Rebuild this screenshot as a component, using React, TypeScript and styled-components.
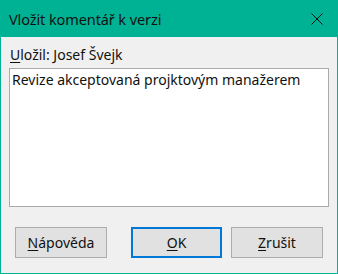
import React from 'react';
import styled, { createGlobalStyle } from 'styled-components';

const GlobalStyle = createGlobalStyle`
  html, body {
    margin: 0;
    padding: 0;
    background: #f0f0f0;
  }
  body {
    font-family: "Noto Sans", "Open Sans", sans-serif;
  }
`;

const Window = styled.div`
  width: 338px;
  height: 274px;
  box-sizing: border-box;
  border: 1px solid #00b294;
  border-top: none;
  background: #f0f0f0;
  display: flex;
  flex-direction: column;
`;

const TitleBar = styled.div`
  height: 37px;
  flex: none;
  background: #00b294;
  display: flex;
  align-items: center;
  justify-content: space-between;
  padding: 0 15px 0 9px;
  margin: 0 -1px;
`;

const Title = styled.span`
  font-size: 14.5px;
  color: #111;
  letter-spacing: -0.1px;
`;

const CloseButton = styled.button`
  width: 12px;
  height: 12px;
  padding: 0;
  border: none;
  background: none;
  display: block;
  svg {
    display: block;
  }
`;

const Body = styled.div`
  flex: 1;
  display: flex;
  flex-direction: column;
  padding: 8px 8px 0;
`;

const Label = styled.label`
  font-size: 14px;
  line-height: 20px;
  color: #111;
  padding-left: 1px;
  u {
    text-decoration-thickness: 1px;
    text-underline-offset: 2px;
  }
`;

const Comment = styled.textarea`
  margin: 3px 0 0;
  width: 320px;
  height: 139px;
  box-sizing: border-box;
  border: 1px solid #ababab;
  background: #fff;
  resize: none;
  padding: 1px 2px;
  font-family: "Noto Sans", "Open Sans", sans-serif;
  font-size: 14px;
  line-height: 20px;
  color: #111;
  outline: none;
`;

const ButtonRow = styled.div`
  display: flex;
  align-items: center;
  margin-top: 20px;
  padding: 0 6px;
`;

const ButtonGroup = styled.div`
  display: flex;
  gap: 9px;
  margin-left: auto;
`;

const Button = styled.button<{ $default?: boolean }>`
  width: ${(p) => (p.$default ? '91px' : '92px')};
  height: 31px;
  box-sizing: border-box;
  background: #e1e1e1;
  border: ${(p) => (p.$default ? '2px solid #0078d7' : '1px solid #adadad')};
  font-family: "Noto Sans", "Open Sans", sans-serif;
  font-size: 14px;
  color: #111;
  padding: 0;
  u {
    text-decoration-thickness: 1px;
    text-underline-offset: 2px;
  }
`;

export default function App() {
  return (
    <>
      <GlobalStyle />
      <Window>
        <TitleBar>
          <Title>Vložit komentář k verzi</Title>
          <CloseButton aria-label="Zavřít">
            <svg width="12" height="12" viewBox="0 0 12 12">
              <path d="M0.5 0.5 L11.5 11.5 M11.5 0.5 L0.5 11.5" stroke="#111" strokeWidth="1" fill="none" />
            </svg>
          </CloseButton>
        </TitleBar>
        <Body>
          <Label>
            <u>U</u>ložil: Josef Švejk
          </Label>
          <Comment readOnly value="Revize akceptovaná projktovým manažerem" />
          <ButtonRow>
            <Button>
              <u>N</u>ápověda
            </Button>
            <ButtonGroup>
              <Button $default>
                <u>O</u>K
              </Button>
              <Button>
                <u>Z</u>rušit
              </Button>
            </ButtonGroup>
          </ButtonRow>
        </Body>
      </Window>
    </>
  );
}
